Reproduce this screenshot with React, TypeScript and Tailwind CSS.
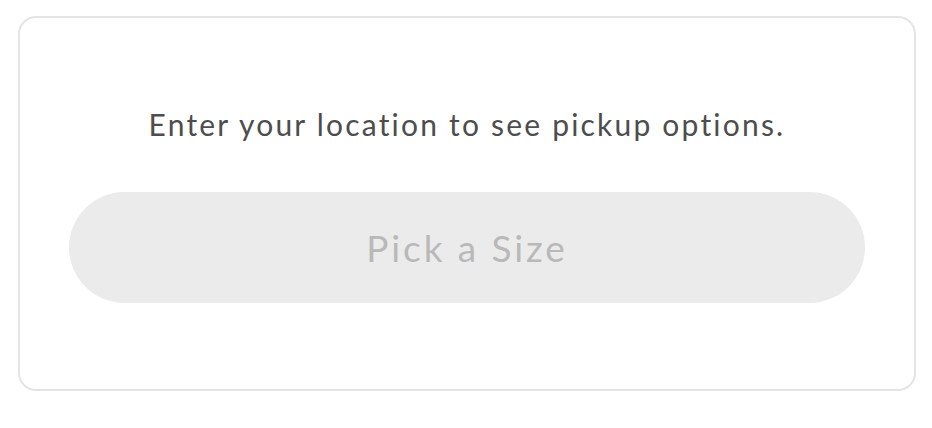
export default function App() {
  return (
    <div className="w-[932px] h-[428px] bg-white pt-4 pl-[18px]" style={{ fontFamily: "Lato, 'Open Sans', sans-serif" }}>
      <div className="w-[898px] h-[375px] rounded-[18px] border-2 border-[#e4e4e4] flex flex-col items-center">
        <p className="mt-[89px] text-[30px] leading-[35px] text-[#4d4d4d] tracking-[2.2px]">
          Enter your location to see pickup options.
        </p>
        <button className="mt-[50px] w-[796px] h-[111px] rounded-full bg-[#ebebeb] text-[37px] text-[#b9b9b9] tracking-[2.9px]">
          Pick a Size
        </button>
      </div>
    </div>
  );
}
